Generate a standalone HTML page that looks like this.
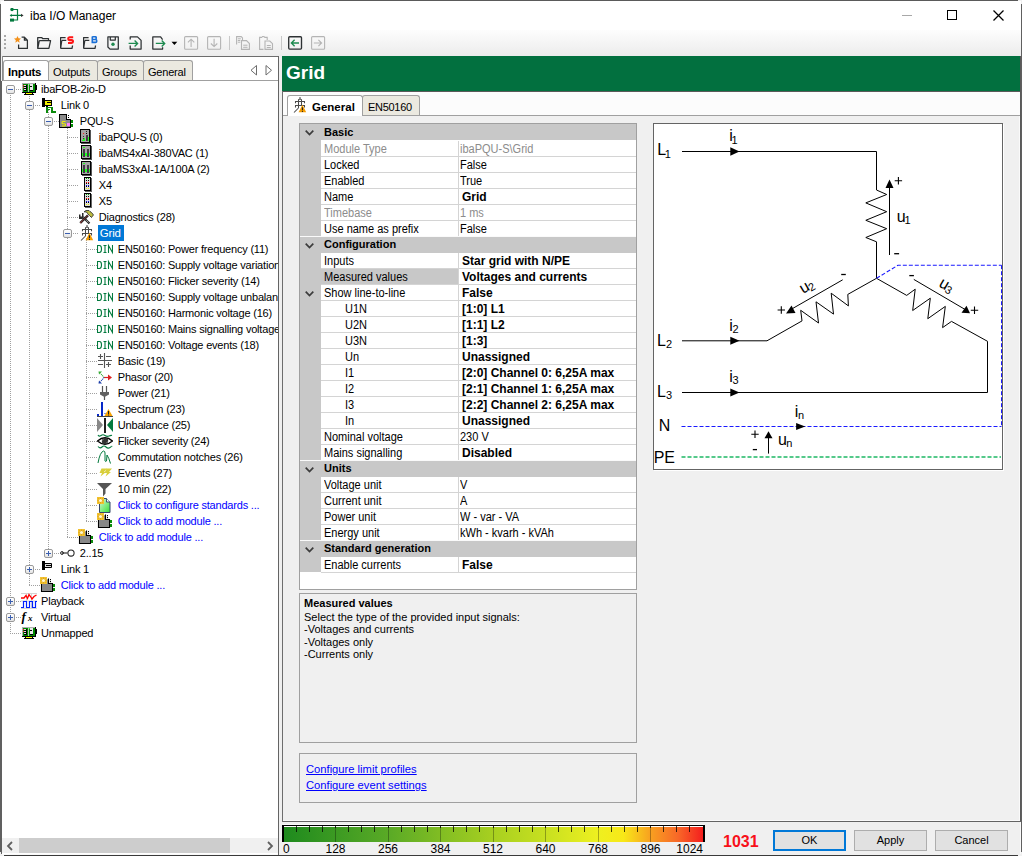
<!DOCTYPE html><html><head><meta charset="utf-8"><style>
*{margin:0;padding:0;box-sizing:border-box}
html,body{width:1022px;height:856px;overflow:hidden;background:#f0f0f0;font-family:"Liberation Sans", sans-serif;font-size:11px;color:#000}
.t{position:absolute;white-space:nowrap;line-height:15px}
.tr{letter-spacing:-0.2px}
a{color:#0000ff}
</style></head><body><div style="position:absolute;left:0px;top:0px;width:1022px;height:856px;background:#f0f0f0"></div><div style="position:absolute;left:1px;top:1px;width:1020px;height:29px;background:#fff"></div><div style="position:absolute;left:1px;top:30px;width:1020px;height:26px;background:linear-gradient(#fdfdfd,#ececec)"></div><div style="position:absolute;left:4px;top:0px;width:1014px;height:1px;background:#5a5a5a"></div><div style="position:absolute;left:0px;top:4px;width:1px;height:848px;background:#606060"></div><div style="position:absolute;left:1021px;top:4px;width:1px;height:848px;background:#606060"></div><div style="position:absolute;left:4px;top:855px;width:1014px;height:1px;background:#3a3a3a"></div><svg style="position:absolute;left:9px;top:8px;" width="16" height="16" viewBox="0 0 16 16"><circle cx="3" cy="1.5" r="1.7" fill="#037a3e"/><path d="M3 1.5H8.5V12H4 M2 7.4H12.5" stroke="#037a3e" stroke-width="1.2" fill="none"/><path d="M0.7 7.4L2.7 5.8V9z" fill="#037a3e"/><path d="M12 5.7L14.6 7.4L12 9.1z" fill="#333"/><rect x="1" y="10.6" width="4" height="3" fill="#037a3e"/></svg><div class="t" style="left:30px;top:8.8px;font-size:12px;color:#000">iba I/O Manager</div><div style="position:absolute;left:902px;top:15px;width:10px;height:1px;background:#a8a8a8"></div><div style="position:absolute;left:947px;top:10px;width:10px;height:10px;border:1px solid #000"></div><svg style="position:absolute;left:993px;top:10px;" width="11" height="11" viewBox="0 0 11 11"><path d="M0.5 0.5L10.5 10.5M10.5 0.5L0.5 10.5" stroke="#000" stroke-width="1.25"/></svg><div style="position:absolute;left:4px;top:35px;width:2px;height:2px;background:#a8a8a8"></div><div style="position:absolute;left:4px;top:39px;width:2px;height:2px;background:#a8a8a8"></div><div style="position:absolute;left:4px;top:43px;width:2px;height:2px;background:#a8a8a8"></div><div style="position:absolute;left:4px;top:47px;width:2px;height:2px;background:#a8a8a8"></div><svg style="position:absolute;left:14px;top:36px;" width="15" height="15" viewBox="0 0 15 15"><path d="M4.6 8.5V12.4H13.4V4.2L10.4 1.2H7.6 M10.4 1.2V4.2H13.4" stroke="#2d3133" stroke-width="1.25" fill="none" stroke-linejoin="round"/><path d="M3.5 0l1.05 2.3 2.45.25-1.85 1.65.55 2.45-2.2-1.3-2.15 1.3.5-2.45L0 2.55l2.45-.25z" fill="#f39019"/></svg><svg style="position:absolute;left:37px;top:36px;" width="15" height="15" viewBox="0 0 15 15"><path d="M0.7 12.4V1.5H4.6L5.6 2.5H11.5V4.6 M2.3 4.7H13.6L11.9 12.4H0.8L2.3 4.7" stroke="#2d3133" stroke-width="1.25" fill="none" stroke-linejoin="round"/></svg><svg style="position:absolute;left:60px;top:36px;" width="15" height="15" viewBox="0 0 15 15"><path d="M0.6 12.4V1.5H5.6 M1.8 4.4H6.3 M0.6 12.4H12L12.6 9.5 M1.8 4.4L0.7 12" stroke="#2d3133" stroke-width="1.25" fill="none" stroke-linejoin="round"/><path d="M13.2 1.2H9.5Q8.2 1.2 8.2 2.7Q8.2 4.1 9.5 4.1H11.6Q13 4.1 13 5.6Q13 7 11.6 7H8" stroke="#ff1414" stroke-width="2.1" fill="none"/></svg><svg style="position:absolute;left:83px;top:36px;" width="15" height="15" viewBox="0 0 15 15"><path d="M0.6 12.4V1.5H5.6 M1.8 4.4H6.3 M0.6 12.4H12L12.6 9.5 M1.8 4.4L0.7 12" stroke="#2d3133" stroke-width="1.25" fill="none" stroke-linejoin="round"/><path d="M9.3 0.6V6.4H12.3Q13.8 6.4 13.8 4.9Q13.8 3.5 12.3 3.5H9.3 M9.3 0.6H12Q13.3 0.6 13.3 2Q13.3 3.5 12 3.5" stroke="#1a6fd6" stroke-width="1.6" fill="none"/></svg><svg style="position:absolute;left:107px;top:36px;" width="15" height="15" viewBox="0 0 15 15"><path d="M0.9 0.9H11.3V13.1H3L0.9 11Z M3.3 0.9V4.1H8.3V0.9" stroke="#2d3133" stroke-width="1.25" fill="none" stroke-linejoin="round"/><circle cx="6" cy="8.3" r="1.7" fill="#1d8a4f"/></svg><svg style="position:absolute;left:128px;top:36px;" width="15" height="15" viewBox="0 0 15 15"><path d="M2.2 3.4V0.9H9.5L13.1 4.4V13.1H2.2V9.6" stroke="#2d3133" stroke-width="1.25" fill="none" stroke-linejoin="round"/><path d="M0.6 7.4H9.5M6.6 4.4L9.6 7.4L6.6 10.4" stroke="#1d8a4f" stroke-width="1.35" fill="none"/></svg><svg style="position:absolute;left:152px;top:36px;" width="15" height="15" viewBox="0 0 15 15"><path d="M10.6 3.6L8.6 0.9H0.8V13.1H10.6V11.2" stroke="#2d3133" stroke-width="1.25" fill="none" stroke-linejoin="round"/><path d="M3.8 7.4H12.6M9.7 4.4L12.7 7.4L9.7 10.4" stroke="#1d8a4f" stroke-width="1.35" fill="none"/></svg><svg style="position:absolute;left:184px;top:36px;" width="15" height="15" viewBox="0 0 15 15"><rect x="0.6" y="0.6" width="13" height="12.6" rx="1" stroke="#b4b4b4" stroke-width="1.1" fill="none"/><path d="M7.1 3.2V11M3.9 6.3L7.1 3.2l3.2 3.1" stroke="#b4b4b4" stroke-width="1.1" fill="none"/></svg><svg style="position:absolute;left:207px;top:36px;" width="15" height="15" viewBox="0 0 15 15"><rect x="0.6" y="0.6" width="13" height="12.6" rx="1" stroke="#b4b4b4" stroke-width="1.1" fill="none"/><path d="M7.1 2.8V10.6M3.9 7.5L7.1 10.6l3.2-3.1" stroke="#b4b4b4" stroke-width="1.1" fill="none"/></svg><svg style="position:absolute;left:236px;top:36px;" width="15" height="15" viewBox="0 0 15 15"><path d="M0.6 8.5V0.6H5.2L6.5 1.9V4" stroke="#b4b4b4" stroke-width="1.1" fill="none"/><path d="M1.8 2.8h3M1.8 4.5h2.5M1.8 6.2h2.5" stroke="#b4b4b4"/><path d="M5.5 4.6H10.5L13.4 7.5V13.4H5.5Z" stroke="#b4b4b4" stroke-width="1.1" fill="none"/><path d="M7.2 9.2h4.3M7.2 11.3h4.3" stroke="#b4b4b4"/></svg><svg style="position:absolute;left:259px;top:36px;" width="15" height="15" viewBox="0 0 15 15"><path d="M4.5 13.4H0.6V1.4H3.2M5.2 1.4H8.2V4" stroke="#b4b4b4" stroke-width="1.1" fill="none"/><path d="M3 0.6H5.6" stroke="#b4b4b4" stroke-width="1.1"/><path d="M6 5H10.8L13.5 7.7V13.4H6Z" stroke="#b4b4b4" stroke-width="1.1" fill="none"/><path d="M7.8 9.5h4M7.8 11.5h4" stroke="#b4b4b4"/></svg><svg style="position:absolute;left:288px;top:36px;" width="15" height="15" viewBox="0 0 15 15"><rect x="0.7" y="0.7" width="12.8" height="12.4" rx="1" stroke="#2d3133" stroke-width="1.35" fill="none"/><path d="M11 7H3.4M6.6 3.8L3.4 7l3.2 3.2" stroke="#1d8a4f" stroke-width="1.35" fill="none"/></svg><svg style="position:absolute;left:311px;top:36px;" width="15" height="15" viewBox="0 0 15 15"><rect x="0.6" y="0.6" width="13" height="12.6" rx="1" stroke="#b4b4b4" stroke-width="1.1" fill="none"/><path d="M2.8 7H10.6M7.4 3.8L10.6 7l-3.2 3.2" stroke="#b4b4b4" stroke-width="1.1" fill="none"/></svg><svg style="position:absolute;left:171px;top:41px;" width="7" height="5" viewBox="0 0 7 5"><path d="M0.5 0.8H6.3L3.4 4Z" fill="#000"/></svg><div style="position:absolute;left:229px;top:36px;width:1px;height:14px;background:#c8c8c8"></div><div style="position:absolute;left:281px;top:36px;width:1px;height:14px;background:#c8c8c8"></div><div style="position:absolute;left:2px;top:56px;width:277px;height:798px;background:#fff"></div><div style="position:absolute;left:2px;top:56px;width:277px;height:1px;background:#6d6d6d"></div><div style="position:absolute;left:2px;top:56px;width:1px;height:25px;background:#8a8a8a"></div><div style="position:absolute;left:1px;top:81px;width:1px;height:773px;background:#606060"></div><div style="position:absolute;left:278px;top:56px;width:1px;height:799px;background:#646464"></div><div style="position:absolute;left:2px;top:854px;width:276px;height:1px;background:#fafafa"></div><div style="position:absolute;left:3px;top:57px;width:275px;height:24px;background:#fff"></div><div style="position:absolute;left:3px;top:60px;width:46px;height:21px;background:#fff;border:1px solid #a0a0a0;border-bottom:none;border-radius:3px 3px 0 0"></div><div class="t" style="left:8px;top:64.5px;font-weight:bold;font-size:11.5px;letter-spacing:-0.2px">Inputs</div><div style="position:absolute;left:48px;top:60px;width:50px;height:21px;background:#ebe9e0;border:1px solid #a0a0a0;border-bottom:none;border-radius:3px 3px 0 0"></div><div class="t" style="left:53px;top:64.5px;font-weight:normal;font-size:11px;letter-spacing:-0.2px">Outputs</div><div style="position:absolute;left:97px;top:60px;width:47px;height:21px;background:#ebe9e0;border:1px solid #a0a0a0;border-bottom:none;border-radius:3px 3px 0 0"></div><div class="t" style="left:102px;top:64.5px;font-weight:normal;font-size:11px;letter-spacing:-0.2px">Groups</div><div style="position:absolute;left:143px;top:60px;width:50px;height:21px;background:#ebe9e0;border:1px solid #a0a0a0;border-bottom:none;border-radius:3px 3px 0 0"></div><div class="t" style="left:148px;top:64.5px;font-weight:normal;font-size:11px;letter-spacing:-0.2px">General</div><div style="position:absolute;left:3px;top:80px;width:275px;height:1px;background:#a0a0a0"></div><svg style="position:absolute;left:250px;top:65px;" width="8" height="11" viewBox="0 0 8 11"><path d="M6.5 0.5V10L1 5.25Z" stroke="#6d6d6d" fill="none"/></svg><svg style="position:absolute;left:265px;top:65px;" width="8" height="11" viewBox="0 0 8 11"><path d="M1 0.5V10L6.5 5.25Z" stroke="#6d6d6d" fill="none"/></svg><div class="tr" style="position:absolute;left:0;top:0;width:278px;height:837px;overflow:hidden"><div style="position:absolute;left:10px;top:89px;width:1px;height:545px;background:repeating-linear-gradient(to bottom,#a0a0a0 0 1px,transparent 1px 2px)"></div><div style="position:absolute;left:29px;top:94px;width:1px;height:492px;background:repeating-linear-gradient(to bottom,#a0a0a0 0 1px,transparent 1px 2px)"></div><div style="position:absolute;left:48px;top:110px;width:1px;height:444px;background:repeating-linear-gradient(to bottom,#a0a0a0 0 1px,transparent 1px 2px)"></div><div style="position:absolute;left:67px;top:126px;width:1px;height:412px;background:repeating-linear-gradient(to bottom,#a0a0a0 0 1px,transparent 1px 2px)"></div><div style="position:absolute;left:86px;top:238px;width:1px;height:284px;background:repeating-linear-gradient(to bottom,#a0a0a0 0 1px,transparent 1px 2px)"></div><div style="position:absolute;left:10px;top:89px;width:11px;height:1px;background:repeating-linear-gradient(to right,#a0a0a0 0 1px,transparent 1px 2px)"></div><div style="position:absolute;left:6px;top:85px;width:9px;height:9px;border:1px solid #9a9a9a;border-radius:2px;background:linear-gradient(#fff,#e4e4e4)"><div style="position:absolute;left:1px;top:3px;width:5px;height:1px;background:#3b5fb0"></div></div><svg style="position:absolute;left:21px;top:81px;" width="16" height="16" viewBox="0 0 16 16"><g shape-rendering="crispEdges"><rect x="1" y="2" width="13" height="1" fill="#b0b0b0"/><rect x="1" y="2" width="1" height="9" fill="#b0b0b0"/><rect x="2" y="3" width="12" height="8" fill="#008a00"/><rect x="2" y="4" width="1" height="1" fill="#ff2020"/><rect x="2" y="6" width="1" height="1" fill="#ff2020"/><rect x="3" y="4" width="2" height="1" fill="#e0e0e0"/><rect x="3" y="6" width="2" height="1" fill="#e0e0e0"/><rect x="3" y="8" width="2" height="1" fill="#e0e0e0"/><rect x="3" y="5" width="3" height="1" fill="#000"/><rect x="3" y="7" width="3" height="1" fill="#000"/><rect x="3" y="9" width="3" height="1" fill="#000"/><rect x="5" y="4" width="1" height="6" fill="#000"/><rect x="7" y="3" width="1" height="8" fill="#c0c0c0"/><rect x="9" y="3" width="3" height="7" fill="#e8e8e8"/><rect x="9" y="5" width="2" height="1" fill="#000"/><rect x="9" y="9" width="3" height="1" fill="#000"/><rect x="8" y="3" width="1" height="1" fill="#20ff20"/><rect x="14" y="2" width="1" height="10" fill="#000"/><rect x="15" y="4" width="1" height="5" fill="#000"/><rect x="1" y="11" width="14" height="1" fill="#000"/><rect x="5" y="12" width="6" height="1" fill="#ffff00"/><rect x="3" y="13" width="10" height="1" fill="#000"/><rect x="4" y="12" width="1" height="1" fill="#000"/><rect x="11" y="12" width="1" height="1" fill="#000"/></g></svg><div class="t" style="left:41px;top:82px;">ibaFOB-2io-D</div><div style="position:absolute;left:29px;top:105px;width:11px;height:1px;background:repeating-linear-gradient(to right,#a0a0a0 0 1px,transparent 1px 2px)"></div><div style="position:absolute;left:25px;top:101px;width:9px;height:9px;border:1px solid #9a9a9a;border-radius:2px;background:linear-gradient(#fff,#e4e4e4)"><div style="position:absolute;left:1px;top:3px;width:5px;height:1px;background:#3b5fb0"></div></div><svg style="position:absolute;left:40px;top:97px;" width="16" height="16" viewBox="0 0 16 16"><g shape-rendering="crispEdges"><rect x="2" y="1" width="3" height="9" fill="#000"/><rect x="5" y="3" width="7" height="6" fill="#000"/><rect x="5" y="4" width="6" height="4" fill="#f0f000"/><rect x="7" y="5" width="4" height="1" fill="#000"/><rect x="6" y="9" width="2" height="1" fill="#000"/><rect x="6" y="10" width="2" height="6" fill="#0a8a0a"/><rect x="6" y="10" width="5" height="1" fill="#0a8a0a"/><rect x="6" y="12" width="4" height="1" fill="#0a8a0a"/><rect x="11" y="10" width="2" height="6" fill="#0a8a0a"/><rect x="11" y="14" width="5" height="2" fill="#0a8a0a"/></g></svg><div class="t" style="left:60.8px;top:98px;">Link 0</div><div style="position:absolute;left:48px;top:121px;width:11px;height:1px;background:repeating-linear-gradient(to right,#a0a0a0 0 1px,transparent 1px 2px)"></div><div style="position:absolute;left:44px;top:117px;width:9px;height:9px;border:1px solid #9a9a9a;border-radius:2px;background:linear-gradient(#fff,#e4e4e4)"><div style="position:absolute;left:1px;top:3px;width:5px;height:1px;background:#3b5fb0"></div></div><svg style="position:absolute;left:59px;top:113px;" width="16" height="16" viewBox="0 0 16 16"><g shape-rendering="crispEdges"><rect x="1" y="2" width="7" height="13" fill="#8c8c8c"/><rect x="7" y="7" width="5" height="8" fill="#8c8c8c"/><rect x="0" y="1" width="8" height="1" fill="#000"/><rect x="0" y="1" width="1" height="14" fill="#000"/><rect x="7" y="1" width="1" height="6" fill="#000"/><rect x="7" y="6" width="5" height="1" fill="#000"/><rect x="11" y="6" width="1" height="9" fill="#000"/><rect x="0" y="14" width="12" height="1" fill="#000"/><rect x="9" y="2" width="1" height="1" fill="#000"/><rect x="9" y="4" width="1" height="1" fill="#000"/><rect x="12" y="7" width="2" height="3" fill="#008a00"/><rect x="12" y="11" width="2" height="3" fill="#008a00"/><rect x="8" y="10" width="3" height="3" fill="#ff80ff"/></g><path d="M6.5 8.5H4Q3 8.5 3 9.7Q3 10.7 4 10.7H5.5Q6.6 10.7 6.6 11.8Q6.6 13 5.5 13H3" stroke="#f0f000" stroke-width="1.1" fill="none"/></svg><div class="t" style="left:79.8px;top:114px;">PQU-S</div><div style="position:absolute;left:67px;top:137px;width:11px;height:1px;background:repeating-linear-gradient(to right,#a0a0a0 0 1px,transparent 1px 2px)"></div><svg style="position:absolute;left:78px;top:129px;" width="16" height="16" viewBox="0 0 16 16"><g shape-rendering="crispEdges"><rect x="2" y="0" width="10" height="14" fill="#000"/><rect x="3" y="1" width="8" height="12" fill="#a4a4a4"/><rect x="5" y="4" width="1" height="1" fill="#ff2020"/><rect x="8" y="2" width="1" height="1" fill="#222"/><rect x="8" y="4" width="1" height="1" fill="#000"/><rect x="8" y="6" width="2" height="6" fill="#403a44"/><rect x="10" y="8" width="1" height="4" fill="#20ff20"/><rect x="5" y="7" width="1" height="1" fill="#333"/><rect x="5" y="9" width="1" height="1" fill="#333"/><rect x="5" y="11" width="1" height="1" fill="#333"/><rect x="12" y="1" width="1" height="14" fill="#555"/><rect x="3" y="14" width="10" height="1" fill="#555"/><path d="M3 12L7 8V12Z" fill="#20ff20"/></g></svg><div class="t" style="left:98.8px;top:130px;">ibaPQU-S (0)</div><div style="position:absolute;left:67px;top:153px;width:11px;height:1px;background:repeating-linear-gradient(to right,#a0a0a0 0 1px,transparent 1px 2px)"></div><svg style="position:absolute;left:78px;top:145px;" width="16" height="16" viewBox="0 0 16 16"><g shape-rendering="crispEdges"><rect x="3" y="0" width="10" height="14" fill="#000"/><rect x="4" y="1" width="8" height="12" fill="#a4a4a4"/><rect x="5" y="2" width="2" height="1" fill="#20ff20"/><rect x="5" y="4" width="2" height="8" fill="#403a44"/><rect x="9" y="4" width="2" height="8" fill="#403a44"/><rect x="4" y="8" width="1" height="3" fill="#20ff20"/><rect x="7" y="8" width="2" height="3" fill="#20ff20"/><rect x="11" y="8" width="1" height="3" fill="#20ff20"/><rect x="13" y="1" width="1" height="14" fill="#555"/><rect x="4" y="14" width="10" height="1" fill="#555"/></g></svg><div class="t" style="left:98.8px;top:146px;">ibaMS4xAI-380VAC (1)</div><div style="position:absolute;left:67px;top:169px;width:11px;height:1px;background:repeating-linear-gradient(to right,#a0a0a0 0 1px,transparent 1px 2px)"></div><svg style="position:absolute;left:78px;top:161px;" width="16" height="16" viewBox="0 0 16 16"><g shape-rendering="crispEdges"><rect x="3" y="0" width="10" height="14" fill="#000"/><rect x="4" y="1" width="8" height="12" fill="#a4a4a4"/><rect x="5" y="2" width="2" height="1" fill="#20ff20"/><rect x="5" y="4" width="2" height="8" fill="#403a44"/><rect x="9" y="4" width="2" height="8" fill="#403a44"/><rect x="4" y="8" width="1" height="3" fill="#20ff20"/><rect x="7" y="8" width="2" height="3" fill="#20ff20"/><rect x="11" y="8" width="1" height="3" fill="#20ff20"/><rect x="13" y="1" width="1" height="14" fill="#555"/><rect x="4" y="14" width="10" height="1" fill="#555"/></g></svg><div class="t" style="left:98.8px;top:162px;">ibaMS3xAI-1A/100A (2)</div><div style="position:absolute;left:67px;top:185px;width:11px;height:1px;background:repeating-linear-gradient(to right,#a0a0a0 0 1px,transparent 1px 2px)"></div><svg style="position:absolute;left:78px;top:177px;" width="16" height="16" viewBox="0 0 16 16"><g shape-rendering="crispEdges"><rect x="6" y="0" width="7" height="14" fill="#000"/><rect x="7" y="1" width="5" height="12" fill="#dcdcdc"/><rect x="13" y="1" width="1" height="14" fill="#666"/><rect x="7" y="14" width="7" height="1" fill="#666"/><rect x="8" y="1" width="1" height="1" fill="#0a0"/><rect x="8" y="3" width="1" height="1" fill="#000"/><rect x="8" y="5" width="1" height="1" fill="#f00"/><rect x="8" y="6" width="1" height="1" fill="#000"/><rect x="8" y="8" width="1" height="1" fill="#00f"/><rect x="8" y="9" width="1" height="1" fill="#000"/><rect x="8" y="11" width="1" height="1" fill="#ee0"/><rect x="10" y="1" width="1" height="1" fill="#0a0"/><rect x="10" y="3" width="1" height="1" fill="#000"/><rect x="10" y="5" width="1" height="1" fill="#f00"/><rect x="10" y="6" width="1" height="1" fill="#000"/><rect x="10" y="8" width="1" height="1" fill="#00f"/><rect x="10" y="9" width="1" height="1" fill="#000"/><rect x="10" y="11" width="1" height="1" fill="#ee0"/></g></svg><div class="t" style="left:98.8px;top:178px;">X4</div><div style="position:absolute;left:67px;top:201px;width:11px;height:1px;background:repeating-linear-gradient(to right,#a0a0a0 0 1px,transparent 1px 2px)"></div><svg style="position:absolute;left:78px;top:193px;" width="16" height="16" viewBox="0 0 16 16"><g shape-rendering="crispEdges"><rect x="6" y="0" width="7" height="14" fill="#000"/><rect x="7" y="1" width="5" height="12" fill="#dcdcdc"/><rect x="13" y="1" width="1" height="14" fill="#666"/><rect x="7" y="14" width="7" height="1" fill="#666"/><rect x="8" y="1" width="1" height="1" fill="#0a0"/><rect x="8" y="3" width="1" height="1" fill="#000"/><rect x="8" y="5" width="1" height="1" fill="#f00"/><rect x="8" y="6" width="1" height="1" fill="#000"/><rect x="8" y="8" width="1" height="1" fill="#00f"/><rect x="8" y="9" width="1" height="1" fill="#000"/><rect x="8" y="11" width="1" height="1" fill="#ee0"/><rect x="10" y="1" width="1" height="1" fill="#0a0"/><rect x="10" y="3" width="1" height="1" fill="#000"/><rect x="10" y="5" width="1" height="1" fill="#f00"/><rect x="10" y="6" width="1" height="1" fill="#000"/><rect x="10" y="8" width="1" height="1" fill="#00f"/><rect x="10" y="9" width="1" height="1" fill="#000"/><rect x="10" y="11" width="1" height="1" fill="#ee0"/></g></svg><div class="t" style="left:98.8px;top:194px;">X5</div><div style="position:absolute;left:67px;top:217px;width:11px;height:1px;background:repeating-linear-gradient(to right,#a0a0a0 0 1px,transparent 1px 2px)"></div><svg style="position:absolute;left:78px;top:209px;" width="16" height="16" viewBox="0 0 16 16"><path d="M5 8L11.5 14.5" stroke="#222" stroke-width="2.2"/><path d="M5 8L11.5 14.5" stroke="#fff" stroke-width="0.8" stroke-dasharray="1 1"/><path d="M1 10V5.5H2.5V7.5H4V4H5.5V9L4.5 10Z" fill="#2a2a2a"/><path d="M2.2 14L10 6.3" stroke="#222" stroke-width="2.4"/><path d="M2.2 14L10 6.3" stroke="#d44" stroke-width="1" stroke-dasharray="1 0.6"/><path d="M6 2.8L8 1.5H11L12 2.5L13.5 3.5L15.5 6L14.5 7L13.5 8.5L11.5 6.5L9.5 4.5L8.5 3Z" fill="#bcbc40" stroke="#333" stroke-width="0.9" stroke-linejoin="round"/></svg><div class="t" style="left:98.8px;top:210px;">Diagnostics (28)</div><div style="position:absolute;left:67px;top:233px;width:11px;height:1px;background:repeating-linear-gradient(to right,#a0a0a0 0 1px,transparent 1px 2px)"></div><div style="position:absolute;left:63px;top:229px;width:9px;height:9px;border:1px solid #9a9a9a;border-radius:2px;background:linear-gradient(#fff,#e4e4e4)"><div style="position:absolute;left:1px;top:3px;width:5px;height:1px;background:#3b5fb0"></div></div><svg style="position:absolute;left:78px;top:225px;" width="16" height="16" viewBox="0 0 16 16"><path d="M7.5 11V2.8L9 1.8L10.5 2.8V9 M4.5 6.2V4.5H13.5V6.2 M4.5 10.5V8.5H13.5V10.5 M9 0V1.8 M7.5 11L3 15.5" stroke="#4a4a4a" stroke-width="1.05" fill="none"/><path d="M11.4 7.8L15.2 15.3H7.6Z" fill="#f59d00"/><rect x="10.9" y="10.3" width="1.1" height="2.8" fill="#222"/><rect x="10.9" y="13.8" width="1.1" height="1.1" fill="#222"/></svg><div style="position:absolute;left:97.8px;top:225px;width:26px;height:16px;background:#0078d7"></div><div class="t" style="left:99.8px;top:226px;color:#fff;font-size:11.5px">Grid</div><div style="position:absolute;left:86px;top:249px;width:11px;height:1px;background:repeating-linear-gradient(to right,#a0a0a0 0 1px,transparent 1px 2px)"></div><svg style="position:absolute;left:97px;top:241px;" width="16" height="16" viewBox="0 0 16 16"><path d="M0.5 4.5V11.5H2.5Q4.5 11.5 4.5 8Q4.5 4.5 2.5 4.5Z M6.5 4.5H9.5M8 4.5V11.5M6.5 11.5H9.5 M11.5 12V4.5L15.5 11.5V4" stroke="#037a3e" stroke-width="1.1" fill="none"/></svg><div class="t" style="left:117.8px;top:242px;">EN50160: Power frequency (11)</div><div style="position:absolute;left:86px;top:265px;width:11px;height:1px;background:repeating-linear-gradient(to right,#a0a0a0 0 1px,transparent 1px 2px)"></div><svg style="position:absolute;left:97px;top:257px;" width="16" height="16" viewBox="0 0 16 16"><path d="M0.5 4.5V11.5H2.5Q4.5 11.5 4.5 8Q4.5 4.5 2.5 4.5Z M6.5 4.5H9.5M8 4.5V11.5M6.5 11.5H9.5 M11.5 12V4.5L15.5 11.5V4" stroke="#037a3e" stroke-width="1.1" fill="none"/></svg><div class="t" style="left:117.8px;top:258px;">EN50160: Supply voltage variation</div><div style="position:absolute;left:86px;top:281px;width:11px;height:1px;background:repeating-linear-gradient(to right,#a0a0a0 0 1px,transparent 1px 2px)"></div><svg style="position:absolute;left:97px;top:273px;" width="16" height="16" viewBox="0 0 16 16"><path d="M0.5 4.5V11.5H2.5Q4.5 11.5 4.5 8Q4.5 4.5 2.5 4.5Z M6.5 4.5H9.5M8 4.5V11.5M6.5 11.5H9.5 M11.5 12V4.5L15.5 11.5V4" stroke="#037a3e" stroke-width="1.1" fill="none"/></svg><div class="t" style="left:117.8px;top:274px;">EN50160: Flicker severity (14)</div><div style="position:absolute;left:86px;top:297px;width:11px;height:1px;background:repeating-linear-gradient(to right,#a0a0a0 0 1px,transparent 1px 2px)"></div><svg style="position:absolute;left:97px;top:289px;" width="16" height="16" viewBox="0 0 16 16"><path d="M0.5 4.5V11.5H2.5Q4.5 11.5 4.5 8Q4.5 4.5 2.5 4.5Z M6.5 4.5H9.5M8 4.5V11.5M6.5 11.5H9.5 M11.5 12V4.5L15.5 11.5V4" stroke="#037a3e" stroke-width="1.1" fill="none"/></svg><div class="t" style="left:117.8px;top:290px;">EN50160: Supply voltage unbalan</div><div style="position:absolute;left:86px;top:313px;width:11px;height:1px;background:repeating-linear-gradient(to right,#a0a0a0 0 1px,transparent 1px 2px)"></div><svg style="position:absolute;left:97px;top:305px;" width="16" height="16" viewBox="0 0 16 16"><path d="M0.5 4.5V11.5H2.5Q4.5 11.5 4.5 8Q4.5 4.5 2.5 4.5Z M6.5 4.5H9.5M8 4.5V11.5M6.5 11.5H9.5 M11.5 12V4.5L15.5 11.5V4" stroke="#037a3e" stroke-width="1.1" fill="none"/></svg><div class="t" style="left:117.8px;top:306px;">EN50160: Harmonic voltage (16)</div><div style="position:absolute;left:86px;top:329px;width:11px;height:1px;background:repeating-linear-gradient(to right,#a0a0a0 0 1px,transparent 1px 2px)"></div><svg style="position:absolute;left:97px;top:321px;" width="16" height="16" viewBox="0 0 16 16"><path d="M0.5 4.5V11.5H2.5Q4.5 11.5 4.5 8Q4.5 4.5 2.5 4.5Z M6.5 4.5H9.5M8 4.5V11.5M6.5 11.5H9.5 M11.5 12V4.5L15.5 11.5V4" stroke="#037a3e" stroke-width="1.1" fill="none"/></svg><div class="t" style="left:117.8px;top:322px;">EN50160: Mains signalling voltage</div><div style="position:absolute;left:86px;top:345px;width:11px;height:1px;background:repeating-linear-gradient(to right,#a0a0a0 0 1px,transparent 1px 2px)"></div><svg style="position:absolute;left:97px;top:337px;" width="16" height="16" viewBox="0 0 16 16"><path d="M0.5 4.5V11.5H2.5Q4.5 11.5 4.5 8Q4.5 4.5 2.5 4.5Z M6.5 4.5H9.5M8 4.5V11.5M6.5 11.5H9.5 M11.5 12V4.5L15.5 11.5V4" stroke="#037a3e" stroke-width="1.1" fill="none"/></svg><div class="t" style="left:117.8px;top:338px;">EN50160: Voltage events (18)</div><div style="position:absolute;left:86px;top:361px;width:11px;height:1px;background:repeating-linear-gradient(to right,#a0a0a0 0 1px,transparent 1px 2px)"></div><svg style="position:absolute;left:97px;top:353px;" width="16" height="16" viewBox="0 0 16 16"><path d="M7.5 0V15M1 7.5H15M1 3.5H6M3.5 1V6M9 3.5H14M1 11.5H6M9 11.5H14M11.5 9V14" stroke="#555" stroke-width="1.1" fill="none"/></svg><div class="t" style="left:117.8px;top:354px;">Basic (19)</div><div style="position:absolute;left:86px;top:377px;width:11px;height:1px;background:repeating-linear-gradient(to right,#a0a0a0 0 1px,transparent 1px 2px)"></div><svg style="position:absolute;left:97px;top:369px;" width="16" height="16" viewBox="0 0 16 16"><path d="M7 8.5H12" stroke="#d22" stroke-width="1.2"/><path d="M11 5.5L15 8.5L11 11.5Z" fill="#d22"/><path d="M7 8.5L3.5 4.5" stroke="#3a3" stroke-width="1.1" stroke-dasharray="1 0.7"/><path d="M1.5 2.5H5L2 5.5Z" fill="#3a3"/><path d="M7 8.5L3.5 12.5" stroke="#1a3ca8" stroke-width="1.1" stroke-dasharray="1 0.7"/><path d="M1.5 14.5H5L2 11.5Z" fill="#1a3ca8"/></svg><div class="t" style="left:117.8px;top:370px;">Phasor (20)</div><div style="position:absolute;left:86px;top:393px;width:11px;height:1px;background:repeating-linear-gradient(to right,#a0a0a0 0 1px,transparent 1px 2px)"></div><svg style="position:absolute;left:97px;top:385px;" width="16" height="16" viewBox="0 0 16 16"><path d="M5.5 1V7M9.5 1V7M7.5 11V15" stroke="#555" stroke-width="1.2" fill="none"/><path d="M3 7H12V9.5L7.5 12L3 9.5Z" fill="#606060"/></svg><div class="t" style="left:117.8px;top:386px;">Power (21)</div><div style="position:absolute;left:86px;top:409px;width:11px;height:1px;background:repeating-linear-gradient(to right,#a0a0a0 0 1px,transparent 1px 2px)"></div><svg style="position:absolute;left:97px;top:401px;" width="16" height="16" viewBox="0 0 16 16"><rect x="4" y="1" width="2" height="14" fill="#0628c8"/><rect x="0" y="13" width="2" height="2" fill="#0628c8"/><rect x="7.5" y="12" width="1" height="1" fill="#0628c8"/><path d="M0 15.5H16" stroke="#444"/><path d="M11.5 8L15.5 15H7.5Z" fill="#f7a200"/><rect x="11" y="10" width="1" height="3" fill="#222"/><rect x="11" y="13.5" width="1" height="1" fill="#222"/></svg><div class="t" style="left:117.8px;top:402px;">Spectrum (23)</div><div style="position:absolute;left:86px;top:425px;width:11px;height:1px;background:repeating-linear-gradient(to right,#a0a0a0 0 1px,transparent 1px 2px)"></div><svg style="position:absolute;left:97px;top:417px;" width="16" height="16" viewBox="0 0 16 16"><path d="M0 1L6 8L0 15Z" fill="#888"/><rect x="7" y="1" width="2" height="15" fill="#222"/><path d="M16 1L10 8L16 15Z" fill="#037a3e"/></svg><div class="t" style="left:117.8px;top:418px;">Unbalance (25)</div><div style="position:absolute;left:86px;top:441px;width:11px;height:1px;background:repeating-linear-gradient(to right,#a0a0a0 0 1px,transparent 1px 2px)"></div><svg style="position:absolute;left:97px;top:433px;" width="16" height="16" viewBox="0 0 16 16"><path d="M1 2Q2 4 4 2.5T8 2.5T12 3T15 2.5M1 13.5Q3 16 5 14T9 14T13 14.5T15 13.5" stroke="#037a3e" stroke-width="1.1" fill="none"/><path d="M0.5 8Q8 1.5 15.5 8Q8 14.5 0.5 8Z" fill="#fff" stroke="#000" stroke-width="1.3"/><circle cx="8" cy="8" r="3.2" fill="#333"/><path d="M5 7.5L6 6.5M11 8.5L10 9.5" stroke="#fff" stroke-width="0.8"/></svg><div class="t" style="left:117.8px;top:434px;">Flicker severity (24)</div><div style="position:absolute;left:86px;top:457px;width:11px;height:1px;background:repeating-linear-gradient(to right,#a0a0a0 0 1px,transparent 1px 2px)"></div><svg style="position:absolute;left:97px;top:449px;" width="16" height="16" viewBox="0 0 16 16"><path d="M1 14Q3 3 6.5 2Q8 2 8 4V12Q8.5 13 9.5 12L10 6Q12 9 13.5 14.5" stroke="#037a3e" stroke-width="1" fill="none"/></svg><div class="t" style="left:117.8px;top:450px;">Commutation notches (26)</div><div style="position:absolute;left:86px;top:473px;width:11px;height:1px;background:repeating-linear-gradient(to right,#a0a0a0 0 1px,transparent 1px 2px)"></div><svg style="position:absolute;left:97px;top:465px;" width="16" height="16" viewBox="0 0 16 16"><path d="M4.5 3.5H10L7 7H9L3.5 11.5L5 8H2.5Z" fill="#d9cf3a"/><path d="M9.5 3.5H15L12 7H14L8.5 11.5L10 8H7.5Z" fill="#d9cf3a"/></svg><div class="t" style="left:117.8px;top:466px;">Events (27)</div><div style="position:absolute;left:86px;top:489px;width:11px;height:1px;background:repeating-linear-gradient(to right,#a0a0a0 0 1px,transparent 1px 2px)"></div><svg style="position:absolute;left:97px;top:481px;" width="16" height="16" viewBox="0 0 16 16"><path d="M0 2H15L8.5 8V12.5L6 15.5V8Z" fill="#555"/></svg><div class="t" style="left:117.8px;top:482px;">10 min (22)</div><div style="position:absolute;left:86px;top:505px;width:11px;height:1px;background:repeating-linear-gradient(to right,#a0a0a0 0 1px,transparent 1px 2px)"></div><svg style="position:absolute;left:97px;top:497px;" width="16" height="16" viewBox="0 0 16 16"><defs><linearGradient id="pg" x1="0" y1="0" x2="1" y2="1"><stop offset="0" stop-color="#d8f8d8"/><stop offset="1" stop-color="#38e038"/></linearGradient></defs><path d="M2.5 1.5H9.5L13 5V15.5H2.5Z" fill="url(#pg)" stroke="#34466a" stroke-width="1"/><path d="M9.5 1.5V5H13" fill="#fff" stroke="#34466a" stroke-width="0.9"/><rect x="0" y="0" width="7" height="7" fill="#f2c230"/><path d="M3.5 0.5V6.5M0.5 3.5H6.5M1.3 1.3L5.7 5.7M5.7 1.3L1.3 5.7" stroke="#d99a10" stroke-width="0.7"/><circle cx="3.5" cy="3.5" r="1.6" fill="#fff8d0"/></svg><div class="t" style="left:117.8px;top:498px;color:#0000ff">Click to configure standards ...</div><div style="position:absolute;left:86px;top:521px;width:11px;height:1px;background:repeating-linear-gradient(to right,#a0a0a0 0 1px,transparent 1px 2px)"></div><svg style="position:absolute;left:97px;top:513px;" width="16" height="16" viewBox="0 0 16 16"><path d="M1.5 7V14.5H12.5V6.5H8.5V1.5" fill="#888" stroke="#000" stroke-width="1.1"/><rect x="2" y="7" width="10" height="7" fill="#888"/><rect x="10" y="2" width="1" height="1.2" fill="#000"/><rect x="10" y="4" width="1" height="1.2" fill="#000"/><rect x="13" y="7" width="2" height="3" fill="#0a8a0a"/><rect x="13" y="11" width="2" height="3" fill="#0a8a0a"/><rect x="0" y="0" width="7" height="7" fill="#f2c230"/><path d="M3.5 0.5V6.5M0.5 3.5H6.5M1.3 1.3L5.7 5.7M5.7 1.3L1.3 5.7" stroke="#d99a10" stroke-width="0.7"/><circle cx="3.5" cy="3.5" r="1.6" fill="#fff8d0"/></svg><div class="t" style="left:117.8px;top:514px;color:#0000ff">Click to add module ...</div><div style="position:absolute;left:67px;top:537px;width:11px;height:1px;background:repeating-linear-gradient(to right,#a0a0a0 0 1px,transparent 1px 2px)"></div><svg style="position:absolute;left:78px;top:529px;" width="16" height="16" viewBox="0 0 16 16"><path d="M1.5 7V14.5H12.5V6.5H8.5V1.5" fill="#888" stroke="#000" stroke-width="1.1"/><rect x="2" y="7" width="10" height="7" fill="#888"/><rect x="10" y="2" width="1" height="1.2" fill="#000"/><rect x="10" y="4" width="1" height="1.2" fill="#000"/><rect x="13" y="7" width="2" height="3" fill="#0a8a0a"/><rect x="13" y="11" width="2" height="3" fill="#0a8a0a"/><rect x="0" y="0" width="7" height="7" fill="#f2c230"/><path d="M3.5 0.5V6.5M0.5 3.5H6.5M1.3 1.3L5.7 5.7M5.7 1.3L1.3 5.7" stroke="#d99a10" stroke-width="0.7"/><circle cx="3.5" cy="3.5" r="1.6" fill="#fff8d0"/></svg><div class="t" style="left:98.8px;top:530px;color:#0000ff">Click to add module ...</div><div style="position:absolute;left:48px;top:553px;width:11px;height:1px;background:repeating-linear-gradient(to right,#a0a0a0 0 1px,transparent 1px 2px)"></div><div style="position:absolute;left:44px;top:549px;width:9px;height:9px;border:1px solid #9a9a9a;border-radius:2px;background:linear-gradient(#fff,#e4e4e4)"><div style="position:absolute;left:1px;top:3px;width:5px;height:1px;background:#3b5fb0"></div><div style="position:absolute;left:3px;top:1px;width:1px;height:5px;background:#3b5fb0"></div></div><svg style="position:absolute;left:59px;top:545px;" width="16" height="16" viewBox="0 0 16 16"><path d="M3 8H8.5" stroke="#222" stroke-width="1.1"/><circle cx="3" cy="8" r="1.4" fill="none" stroke="#222" stroke-width="1"/><circle cx="12" cy="8" r="3.1" fill="none" stroke="#222" stroke-width="1.05"/></svg><div class="t" style="left:79.8px;top:546px;">2..15</div><div style="position:absolute;left:29px;top:569px;width:11px;height:1px;background:repeating-linear-gradient(to right,#a0a0a0 0 1px,transparent 1px 2px)"></div><div style="position:absolute;left:25px;top:565px;width:9px;height:9px;border:1px solid #9a9a9a;border-radius:2px;background:linear-gradient(#fff,#e4e4e4)"><div style="position:absolute;left:1px;top:3px;width:5px;height:1px;background:#3b5fb0"></div><div style="position:absolute;left:3px;top:1px;width:1px;height:5px;background:#3b5fb0"></div></div><svg style="position:absolute;left:40px;top:561px;" width="16" height="16" viewBox="0 0 16 16"><rect x="2" y="0" width="3" height="9" fill="#000"/><path d="M5 2.5H11.5V6.5H5" fill="#ddd" stroke="#000" stroke-width="1"/><rect x="6" y="4" width="5" height="1" fill="#000"/></svg><div class="t" style="left:60.8px;top:562px;">Link 1</div><div style="position:absolute;left:29px;top:585px;width:11px;height:1px;background:repeating-linear-gradient(to right,#a0a0a0 0 1px,transparent 1px 2px)"></div><svg style="position:absolute;left:40px;top:577px;" width="16" height="16" viewBox="0 0 16 16"><path d="M1.5 7V14.5H12.5V6.5H8.5V1.5" fill="#888" stroke="#000" stroke-width="1.1"/><rect x="2" y="7" width="10" height="7" fill="#888"/><rect x="10" y="2" width="1" height="1.2" fill="#000"/><rect x="10" y="4" width="1" height="1.2" fill="#000"/><rect x="13" y="7" width="2" height="3" fill="#0a8a0a"/><rect x="13" y="11" width="2" height="3" fill="#0a8a0a"/><rect x="0" y="0" width="7" height="7" fill="#f2c230"/><path d="M3.5 0.5V6.5M0.5 3.5H6.5M1.3 1.3L5.7 5.7M5.7 1.3L1.3 5.7" stroke="#d99a10" stroke-width="0.7"/><circle cx="3.5" cy="3.5" r="1.6" fill="#fff8d0"/></svg><div class="t" style="left:60.8px;top:578px;color:#0000ff">Click to add module ...</div><div style="position:absolute;left:10px;top:601px;width:11px;height:1px;background:repeating-linear-gradient(to right,#a0a0a0 0 1px,transparent 1px 2px)"></div><div style="position:absolute;left:6px;top:597px;width:9px;height:9px;border:1px solid #9a9a9a;border-radius:2px;background:linear-gradient(#fff,#e4e4e4)"><div style="position:absolute;left:1px;top:3px;width:5px;height:1px;background:#3b5fb0"></div><div style="position:absolute;left:3px;top:1px;width:1px;height:5px;background:#3b5fb0"></div></div><svg style="position:absolute;left:21px;top:593px;" width="16" height="16" viewBox="0 0 16 16"><path d="M0 0.5H16M0 15.5H16M0 8H16M5.5 0V16M10.5 0V16" stroke="#d4d4d4" stroke-width="1"/><path d="M0 5H3L5 2.5L6.5 5.5L8 1.5L9.5 3.5L11 6L13 3.5L15.5 2" stroke="#ff0000" stroke-width="1.3" fill="none"/><path d="M0 14.5H2.5V8.5H5.5V14.5H8.5V8.5H11.5V14.5H14.5V8.5H16" stroke="#0020ff" stroke-width="1.2" fill="none"/></svg><div class="t" style="left:41px;top:594px;">Playback</div><div style="position:absolute;left:10px;top:617px;width:11px;height:1px;background:repeating-linear-gradient(to right,#a0a0a0 0 1px,transparent 1px 2px)"></div><div style="position:absolute;left:6px;top:613px;width:9px;height:9px;border:1px solid #9a9a9a;border-radius:2px;background:linear-gradient(#fff,#e4e4e4)"><div style="position:absolute;left:1px;top:3px;width:5px;height:1px;background:#3b5fb0"></div><div style="position:absolute;left:3px;top:1px;width:1px;height:5px;background:#3b5fb0"></div></div><svg style="position:absolute;left:21px;top:609px;" width="16" height="16" viewBox="0 0 16 16"><text x="0.5" y="12" font-size="13" font-style="italic" font-weight="bold" fill="#000" font-family="Liberation Serif">f</text><text x="7" y="12" font-size="9" font-style="italic" font-weight="bold" fill="#000" font-family="Liberation Serif">x</text></svg><div class="t" style="left:41px;top:610px;">Virtual</div><div style="position:absolute;left:10px;top:633px;width:11px;height:1px;background:repeating-linear-gradient(to right,#a0a0a0 0 1px,transparent 1px 2px)"></div><svg style="position:absolute;left:21px;top:625px;" width="16" height="16" viewBox="0 0 16 16"><g shape-rendering="crispEdges"><rect x="1" y="2" width="13" height="1" fill="#b0b0b0"/><rect x="1" y="2" width="1" height="9" fill="#b0b0b0"/><rect x="2" y="3" width="12" height="8" fill="#008a00"/><rect x="2" y="4" width="1" height="1" fill="#ff2020"/><rect x="2" y="6" width="1" height="1" fill="#ff2020"/><rect x="3" y="4" width="2" height="1" fill="#e0e0e0"/><rect x="3" y="6" width="2" height="1" fill="#e0e0e0"/><rect x="3" y="8" width="2" height="1" fill="#e0e0e0"/><rect x="3" y="5" width="3" height="1" fill="#000"/><rect x="3" y="7" width="3" height="1" fill="#000"/><rect x="3" y="9" width="3" height="1" fill="#000"/><rect x="5" y="4" width="1" height="6" fill="#000"/><rect x="7" y="3" width="1" height="8" fill="#c0c0c0"/><rect x="9" y="3" width="3" height="7" fill="#e8e8e8"/><rect x="9" y="5" width="2" height="1" fill="#000"/><rect x="9" y="9" width="3" height="1" fill="#000"/><rect x="8" y="3" width="1" height="1" fill="#20ff20"/><rect x="14" y="2" width="1" height="10" fill="#000"/><rect x="15" y="4" width="1" height="5" fill="#000"/><rect x="1" y="11" width="14" height="1" fill="#000"/><rect x="5" y="12" width="6" height="1" fill="#ffff00"/><rect x="3" y="13" width="10" height="1" fill="#000"/><rect x="4" y="12" width="1" height="1" fill="#000"/><rect x="11" y="12" width="1" height="1" fill="#000"/></g></svg><div class="t" style="left:41px;top:626px;">Unmapped</div></div><div style="position:absolute;left:2px;top:838px;width:276px;height:15px;background:#f0f0f0"></div><div style="position:absolute;left:19px;top:838px;width:211px;height:15px;background:#cdcdcd"></div><svg style="position:absolute;left:6px;top:841px;" width="8" height="10" viewBox="0 0 8 10"><path d="M6 1L2 5L6 9" stroke="#606060" stroke-width="1.8" fill="none"/></svg><svg style="position:absolute;left:266px;top:841px;" width="8" height="10" viewBox="0 0 8 10"><path d="M2 1L6 5L2 9" stroke="#606060" stroke-width="1.8" fill="none"/></svg><div style="position:absolute;left:282px;top:56px;width:738px;height:35px;background:#02703f"></div><div class="t" style="left:286px;top:62px;font-size:19px;font-weight:bold;color:#fff;line-height:22px">Grid</div><div style="position:absolute;left:282px;top:91px;width:738px;height:1px;background:#5a5a5a"></div><div style="position:absolute;left:1020px;top:56px;width:1px;height:766px;background:#5a5a5a"></div><div style="position:absolute;left:1020px;top:822px;width:1px;height:32px;background:#fafafa"></div><div style="position:absolute;left:283px;top:92px;width:737px;height:23px;background:#fcfcfc"></div><div style="position:absolute;left:283px;top:115px;width:737px;height:706px;background:#f0f0f0"></div><div style="position:absolute;left:283px;top:115px;width:737px;height:1px;background:#a0a0a0"></div><div style="position:absolute;left:1019px;top:116px;width:1px;height:705px;background:#fafafa"></div><div style="position:absolute;left:283px;top:820px;width:737px;height:1px;background:#fafafa"></div><div style="position:absolute;left:282px;top:821px;width:739px;height:1px;background:#646464"></div><div style="position:absolute;left:282px;top:91px;width:1px;height:731px;background:#6e6e6e"></div><div style="position:absolute;left:287px;top:95px;width:76px;height:21px;background:#fff;border:1px solid #a0a0a0;border-bottom:none;border-radius:3px 3px 0 0"></div><div style="position:absolute;left:362px;top:95px;width:58px;height:20px;background:#ebe9e0;border:1px solid #a0a0a0;border-bottom:none;border-radius:3px 3px 0 0"></div><svg style="position:absolute;left:290.5px;top:97px;" width="16" height="16" viewBox="0 0 16 16"><path d="M7.5 11V2.8L9 1.8L10.5 2.8V9 M4.5 6.2V4.5H13.5V6.2 M4.5 10.5V8.5H13.5V10.5 M9 0V1.8 M7.5 11L3 15.5" stroke="#4a4a4a" stroke-width="1.05" fill="none"/><path d="M11.4 7.8L15.2 15.3H7.6Z" fill="#f59d00"/><rect x="10.9" y="10.3" width="1.1" height="2.8" fill="#222"/><rect x="10.9" y="13.8" width="1.1" height="1.1" fill="#222"/></svg><div class="t" style="left:312px;top:100px;font-weight:bold;font-size:11.5px">General</div><div class="t" style="left:368px;top:100px;font-size:11px;letter-spacing:-0.3px">EN50160</div><div style="position:absolute;left:299px;top:123px;width:338px;height:467px;background:#fff;border:1px solid #a0a0a0"></div><div style="position:absolute;left:300px;top:124px;width:21px;height:448px;background:#c8c8c8"></div><div style="position:absolute;left:300px;top:124px;width:336px;height:16px;background:#c8c8c8"></div><svg style="position:absolute;left:305px;top:129px;" width="10" height="7" viewBox="0 0 10 7"><path d="M0.7 1.7L4.5 5.5L8.3 1.7" stroke="#3c3c3c" stroke-width="1.7" fill="none"/></svg><div class="t" style="left:324px;top:125px;font-weight:bold">Basic</div><div style="position:absolute;left:321px;top:141px;width:137px;height:15px;background:#fff"></div><div style="position:absolute;left:321px;top:156px;width:315px;height:1px;background:#d4d4d4"></div><div style="position:absolute;left:458px;top:141px;width:1px;height:16px;background:#d4d4d4"></div><div class="t" style="left:324px;top:141.5px;color:#8c8c8c;font-size:12px;transform:scaleX(0.917);transform-origin:0 0">Module Type</div><div class="t" style="left:460px;top:141.5px;color:#8c8c8c;font-size:12px;transform:scaleX(0.917);transform-origin:0 0">ibaPQU-S\Grid</div><div style="position:absolute;left:321px;top:157px;width:137px;height:15px;background:#fff"></div><div style="position:absolute;left:321px;top:172px;width:315px;height:1px;background:#d4d4d4"></div><div style="position:absolute;left:458px;top:157px;width:1px;height:16px;background:#d4d4d4"></div><div class="t" style="left:324px;top:157.5px;color:#000;font-size:12px;transform:scaleX(0.917);transform-origin:0 0">Locked</div><div class="t" style="left:460px;top:157.5px;color:#000;font-size:12px;transform:scaleX(0.917);transform-origin:0 0">False</div><div style="position:absolute;left:321px;top:173px;width:137px;height:15px;background:#fff"></div><div style="position:absolute;left:321px;top:188px;width:315px;height:1px;background:#d4d4d4"></div><div style="position:absolute;left:458px;top:173px;width:1px;height:16px;background:#d4d4d4"></div><div class="t" style="left:324px;top:173.5px;color:#000;font-size:12px;transform:scaleX(0.917);transform-origin:0 0">Enabled</div><div class="t" style="left:460px;top:173.5px;color:#000;font-size:12px;transform:scaleX(0.917);transform-origin:0 0">True</div><div style="position:absolute;left:321px;top:189px;width:137px;height:15px;background:#fff"></div><div style="position:absolute;left:321px;top:204px;width:315px;height:1px;background:#d4d4d4"></div><div style="position:absolute;left:458px;top:189px;width:1px;height:16px;background:#d4d4d4"></div><div class="t" style="left:324px;top:189.5px;color:#000;font-size:12px;transform:scaleX(0.917);transform-origin:0 0">Name</div><div class="t" style="left:462px;top:189.5px;color:#000;font-size:12px;transform:scaleX(0.917);transform-origin:0 0;font-weight:bold;transform:none">Grid</div><div style="position:absolute;left:321px;top:205px;width:137px;height:15px;background:#fff"></div><div style="position:absolute;left:321px;top:220px;width:315px;height:1px;background:#d4d4d4"></div><div style="position:absolute;left:458px;top:205px;width:1px;height:16px;background:#d4d4d4"></div><div class="t" style="left:324px;top:205.5px;color:#8c8c8c;font-size:12px;transform:scaleX(0.917);transform-origin:0 0">Timebase</div><div class="t" style="left:460px;top:205.5px;color:#8c8c8c;font-size:12px;transform:scaleX(0.917);transform-origin:0 0">1 ms</div><div style="position:absolute;left:321px;top:221px;width:137px;height:15px;background:#fff"></div><div style="position:absolute;left:321px;top:236px;width:315px;height:1px;background:#d4d4d4"></div><div style="position:absolute;left:458px;top:221px;width:1px;height:16px;background:#d4d4d4"></div><div class="t" style="left:324px;top:221.5px;color:#000;font-size:12px;transform:scaleX(0.917);transform-origin:0 0">Use name as prefix</div><div class="t" style="left:460px;top:221.5px;color:#000;font-size:12px;transform:scaleX(0.917);transform-origin:0 0">False</div><div style="position:absolute;left:300px;top:237px;width:336px;height:16px;background:#c8c8c8"></div><div style="position:absolute;left:300px;top:236px;width:336px;height:1px;background:#fafafa"></div><svg style="position:absolute;left:305px;top:242px;" width="10" height="7" viewBox="0 0 10 7"><path d="M0.7 1.7L4.5 5.5L8.3 1.7" stroke="#3c3c3c" stroke-width="1.7" fill="none"/></svg><div class="t" style="left:324px;top:237px;font-weight:bold">Configuration</div><div style="position:absolute;left:321px;top:253px;width:137px;height:15px;background:#fff"></div><div style="position:absolute;left:321px;top:268px;width:315px;height:1px;background:#d4d4d4"></div><div style="position:absolute;left:458px;top:253px;width:1px;height:16px;background:#d4d4d4"></div><div class="t" style="left:324px;top:253.5px;color:#000;font-size:12px;transform:scaleX(0.917);transform-origin:0 0">Inputs</div><div class="t" style="left:462px;top:253.5px;color:#000;font-size:12px;transform:scaleX(0.917);transform-origin:0 0;font-weight:bold;transform:none">Star grid with N/PE</div><div style="position:absolute;left:321px;top:269px;width:137px;height:15px;background:#c8c8c8"></div><div style="position:absolute;left:321px;top:284px;width:315px;height:1px;background:#d4d4d4"></div><div style="position:absolute;left:458px;top:269px;width:1px;height:16px;background:#d4d4d4"></div><div class="t" style="left:324px;top:269.5px;color:#000;font-size:12px;transform:scaleX(0.917);transform-origin:0 0">Measured values</div><div class="t" style="left:462px;top:269.5px;color:#000;font-size:12px;transform:scaleX(0.917);transform-origin:0 0;font-weight:bold;transform:none">Voltages and currents</div><div style="position:absolute;left:321px;top:285px;width:137px;height:15px;background:#fff"></div><div style="position:absolute;left:321px;top:300px;width:315px;height:1px;background:#d4d4d4"></div><div style="position:absolute;left:458px;top:285px;width:1px;height:16px;background:#d4d4d4"></div><div class="t" style="left:324px;top:285.5px;color:#000;font-size:12px;transform:scaleX(0.917);transform-origin:0 0">Show line-to-line</div><div class="t" style="left:462px;top:285.5px;color:#000;font-size:12px;transform:scaleX(0.917);transform-origin:0 0;font-weight:bold;transform:none">False</div><svg style="position:absolute;left:305px;top:290px;" width="10" height="7" viewBox="0 0 10 7"><path d="M0.7 1.7L4.5 5.5L8.3 1.7" stroke="#3c3c3c" stroke-width="1.7" fill="none"/></svg><div style="position:absolute;left:321px;top:301px;width:137px;height:15px;background:#fff"></div><div style="position:absolute;left:321px;top:316px;width:315px;height:1px;background:#d4d4d4"></div><div style="position:absolute;left:458px;top:301px;width:1px;height:16px;background:#d4d4d4"></div><div class="t" style="left:345px;top:301.5px;color:#000;font-size:12px;transform:scaleX(0.917);transform-origin:0 0">U1N</div><div class="t" style="left:462px;top:301.5px;color:#000;font-size:12px;transform:scaleX(0.917);transform-origin:0 0;font-weight:bold;transform:none">[1:0] L1</div><div style="position:absolute;left:321px;top:317px;width:137px;height:15px;background:#fff"></div><div style="position:absolute;left:321px;top:332px;width:315px;height:1px;background:#d4d4d4"></div><div style="position:absolute;left:458px;top:317px;width:1px;height:16px;background:#d4d4d4"></div><div class="t" style="left:345px;top:317.5px;color:#000;font-size:12px;transform:scaleX(0.917);transform-origin:0 0">U2N</div><div class="t" style="left:462px;top:317.5px;color:#000;font-size:12px;transform:scaleX(0.917);transform-origin:0 0;font-weight:bold;transform:none">[1:1] L2</div><div style="position:absolute;left:321px;top:333px;width:137px;height:15px;background:#fff"></div><div style="position:absolute;left:321px;top:348px;width:315px;height:1px;background:#d4d4d4"></div><div style="position:absolute;left:458px;top:333px;width:1px;height:16px;background:#d4d4d4"></div><div class="t" style="left:345px;top:333.5px;color:#000;font-size:12px;transform:scaleX(0.917);transform-origin:0 0">U3N</div><div class="t" style="left:462px;top:333.5px;color:#000;font-size:12px;transform:scaleX(0.917);transform-origin:0 0;font-weight:bold;transform:none">[1:3]</div><div style="position:absolute;left:321px;top:349px;width:137px;height:15px;background:#fff"></div><div style="position:absolute;left:321px;top:364px;width:315px;height:1px;background:#d4d4d4"></div><div style="position:absolute;left:458px;top:349px;width:1px;height:16px;background:#d4d4d4"></div><div class="t" style="left:345px;top:349.5px;color:#000;font-size:12px;transform:scaleX(0.917);transform-origin:0 0">Un</div><div class="t" style="left:462px;top:349.5px;color:#000;font-size:12px;transform:scaleX(0.917);transform-origin:0 0;font-weight:bold;transform:none">Unassigned</div><div style="position:absolute;left:321px;top:365px;width:137px;height:15px;background:#fff"></div><div style="position:absolute;left:321px;top:380px;width:315px;height:1px;background:#d4d4d4"></div><div style="position:absolute;left:458px;top:365px;width:1px;height:16px;background:#d4d4d4"></div><div class="t" style="left:345px;top:365.5px;color:#000;font-size:12px;transform:scaleX(0.917);transform-origin:0 0">I1</div><div class="t" style="left:462px;top:365.5px;color:#000;font-size:12px;transform:scaleX(0.917);transform-origin:0 0;font-weight:bold;transform:none">[2:0] Channel 0: 6,25A max</div><div style="position:absolute;left:321px;top:381px;width:137px;height:15px;background:#fff"></div><div style="position:absolute;left:321px;top:396px;width:315px;height:1px;background:#d4d4d4"></div><div style="position:absolute;left:458px;top:381px;width:1px;height:16px;background:#d4d4d4"></div><div class="t" style="left:345px;top:381.5px;color:#000;font-size:12px;transform:scaleX(0.917);transform-origin:0 0">I2</div><div class="t" style="left:462px;top:381.5px;color:#000;font-size:12px;transform:scaleX(0.917);transform-origin:0 0;font-weight:bold;transform:none">[2:1] Channel 1: 6,25A max</div><div style="position:absolute;left:321px;top:397px;width:137px;height:15px;background:#fff"></div><div style="position:absolute;left:321px;top:412px;width:315px;height:1px;background:#d4d4d4"></div><div style="position:absolute;left:458px;top:397px;width:1px;height:16px;background:#d4d4d4"></div><div class="t" style="left:345px;top:397.5px;color:#000;font-size:12px;transform:scaleX(0.917);transform-origin:0 0">I3</div><div class="t" style="left:462px;top:397.5px;color:#000;font-size:12px;transform:scaleX(0.917);transform-origin:0 0;font-weight:bold;transform:none">[2:2] Channel 2: 6,25A max</div><div style="position:absolute;left:321px;top:413px;width:137px;height:15px;background:#fff"></div><div style="position:absolute;left:321px;top:428px;width:315px;height:1px;background:#d4d4d4"></div><div style="position:absolute;left:458px;top:413px;width:1px;height:16px;background:#d4d4d4"></div><div class="t" style="left:345px;top:413.5px;color:#000;font-size:12px;transform:scaleX(0.917);transform-origin:0 0">In</div><div class="t" style="left:462px;top:413.5px;color:#000;font-size:12px;transform:scaleX(0.917);transform-origin:0 0;font-weight:bold;transform:none">Unassigned</div><div style="position:absolute;left:321px;top:429px;width:137px;height:15px;background:#fff"></div><div style="position:absolute;left:321px;top:444px;width:315px;height:1px;background:#d4d4d4"></div><div style="position:absolute;left:458px;top:429px;width:1px;height:16px;background:#d4d4d4"></div><div class="t" style="left:324px;top:429.5px;color:#000;font-size:12px;transform:scaleX(0.917);transform-origin:0 0">Nominal voltage</div><div class="t" style="left:460px;top:429.5px;color:#000;font-size:12px;transform:scaleX(0.917);transform-origin:0 0">230 V</div><div style="position:absolute;left:321px;top:445px;width:137px;height:15px;background:#fff"></div><div style="position:absolute;left:321px;top:460px;width:315px;height:1px;background:#d4d4d4"></div><div style="position:absolute;left:458px;top:445px;width:1px;height:16px;background:#d4d4d4"></div><div class="t" style="left:324px;top:445.5px;color:#000;font-size:12px;transform:scaleX(0.917);transform-origin:0 0">Mains signalling</div><div class="t" style="left:462px;top:445.5px;color:#000;font-size:12px;transform:scaleX(0.917);transform-origin:0 0;font-weight:bold;transform:none">Disabled</div><div style="position:absolute;left:300px;top:461px;width:336px;height:16px;background:#c8c8c8"></div><div style="position:absolute;left:300px;top:460px;width:336px;height:1px;background:#fafafa"></div><svg style="position:absolute;left:305px;top:466px;" width="10" height="7" viewBox="0 0 10 7"><path d="M0.7 1.7L4.5 5.5L8.3 1.7" stroke="#3c3c3c" stroke-width="1.7" fill="none"/></svg><div class="t" style="left:324px;top:461px;font-weight:bold">Units</div><div style="position:absolute;left:321px;top:477px;width:137px;height:15px;background:#fff"></div><div style="position:absolute;left:321px;top:492px;width:315px;height:1px;background:#d4d4d4"></div><div style="position:absolute;left:458px;top:477px;width:1px;height:16px;background:#d4d4d4"></div><div class="t" style="left:324px;top:477.5px;color:#000;font-size:12px;transform:scaleX(0.917);transform-origin:0 0">Voltage unit</div><div class="t" style="left:460px;top:477.5px;color:#000;font-size:12px;transform:scaleX(0.917);transform-origin:0 0">V</div><div style="position:absolute;left:321px;top:493px;width:137px;height:15px;background:#fff"></div><div style="position:absolute;left:321px;top:508px;width:315px;height:1px;background:#d4d4d4"></div><div style="position:absolute;left:458px;top:493px;width:1px;height:16px;background:#d4d4d4"></div><div class="t" style="left:324px;top:493.5px;color:#000;font-size:12px;transform:scaleX(0.917);transform-origin:0 0">Current unit</div><div class="t" style="left:460px;top:493.5px;color:#000;font-size:12px;transform:scaleX(0.917);transform-origin:0 0">A</div><div style="position:absolute;left:321px;top:509px;width:137px;height:15px;background:#fff"></div><div style="position:absolute;left:321px;top:524px;width:315px;height:1px;background:#d4d4d4"></div><div style="position:absolute;left:458px;top:509px;width:1px;height:16px;background:#d4d4d4"></div><div class="t" style="left:324px;top:509.5px;color:#000;font-size:12px;transform:scaleX(0.917);transform-origin:0 0">Power unit</div><div class="t" style="left:460px;top:509.5px;color:#000;font-size:12px;transform:scaleX(0.917);transform-origin:0 0">W - var - VA</div><div style="position:absolute;left:321px;top:525px;width:137px;height:15px;background:#fff"></div><div style="position:absolute;left:321px;top:540px;width:315px;height:1px;background:#d4d4d4"></div><div style="position:absolute;left:458px;top:525px;width:1px;height:16px;background:#d4d4d4"></div><div class="t" style="left:324px;top:525.5px;color:#000;font-size:12px;transform:scaleX(0.917);transform-origin:0 0">Energy unit</div><div class="t" style="left:460px;top:525.5px;color:#000;font-size:12px;transform:scaleX(0.917);transform-origin:0 0">kWh - kvarh - kVAh</div><div style="position:absolute;left:300px;top:541px;width:336px;height:16px;background:#c8c8c8"></div><div style="position:absolute;left:300px;top:540px;width:336px;height:1px;background:#fafafa"></div><svg style="position:absolute;left:305px;top:546px;" width="10" height="7" viewBox="0 0 10 7"><path d="M0.7 1.7L4.5 5.5L8.3 1.7" stroke="#3c3c3c" stroke-width="1.7" fill="none"/></svg><div class="t" style="left:324px;top:541px;font-weight:bold">Standard generation</div><div style="position:absolute;left:321px;top:557px;width:137px;height:15px;background:#fff"></div><div style="position:absolute;left:321px;top:572px;width:315px;height:1px;background:#d4d4d4"></div><div style="position:absolute;left:458px;top:557px;width:1px;height:16px;background:#d4d4d4"></div><div class="t" style="left:324px;top:557.5px;color:#000;font-size:12px;transform:scaleX(0.917);transform-origin:0 0">Enable currents</div><div class="t" style="left:462px;top:557.5px;color:#000;font-size:12px;transform:scaleX(0.917);transform-origin:0 0;font-weight:bold;transform:none">False</div><div style="position:absolute;left:299px;top:593px;width:338px;height:150px;border:1px solid #a0a0a0;background:#f0f0f0"></div><div class="t" style="left:304px;top:596px;font-weight:bold">Measured values</div><div class="t" style="left:304px;top:611.0px;line-height:13px">Select the type of the provided input signals:</div><div class="t" style="left:304px;top:623.3px;line-height:13px">-Voltages and currents</div><div class="t" style="left:304px;top:635.6px;line-height:13px">-Voltages only</div><div class="t" style="left:304px;top:647.9px;line-height:13px">-Currents only</div><div style="position:absolute;left:299px;top:753px;width:338px;height:50px;border:1px solid #a0a0a0;background:#f0f0f0"></div><div class="t" style="left:306px;top:762px;color:#0000ff;font-size:11.2px"><span style="text-decoration:underline">Configure limit profiles</span></div><div class="t" style="left:306px;top:778px;color:#0000ff;font-size:11.2px"><span style="text-decoration:underline">Configure event settings</span></div><div style="position:absolute;left:653px;top:123px;width:350px;height:347px;background:#fff;border:1px solid #646464;box-shadow:1px 1px 0 #fff"></div><svg style="position:absolute;left:653px;top:123px" width="350" height="347" viewBox="653 123 350 347"><path d="M682,151.5 L876.5,151.5 L876.5,190 L886.7,194.5 L865.8,202.9 L886.7,211.7 L865.8,220.3 L886.7,228.7 L865.8,237.5 L876.5,241.8 L876.5,278.3" fill="none" stroke="#000" stroke-width="1" /><path d="M730.3,147.3 L739.5,151.5 L730.3,155.7Z" fill="#000"/><path d="M682,340.8 L767,340.8 L802,320.9 L800.7,310.3 L818.5,323 L816,301.8 L833.5,314.1 L831.2,293.2 L848.4,305.9 L847.8,294.4 L876.5,278.3" fill="none" stroke="#000" stroke-width="1" /><path d="M730.3,336.8 L739.5,340.8 L730.3,344.8Z" fill="#000"/><path d="M682,392.5 L987.5,392.5 L987.5,341.3 L951.5,321.4 L942.6,327.6 L945.3,306.4 L927.8,318.7 L930.3,298.2 L912.7,310.5 L915.2,289.2 L906.7,295.4 L876.5,278.3" fill="none" stroke="#000" stroke-width="1" /><path d="M730.3,388.5 L739.5,392.5 L730.3,396.5Z" fill="#000"/><path d="M889.5,255 L889.5,186" fill="none" stroke="#000" stroke-width="1" /><path d="M885.5,188 L889.5,179.5 L893.5,188Z" fill="#000"/><path d="M842.7,279.8 L790,310" fill="none" stroke="#000" stroke-width="1" /><path d="M786,313.5 L795.5,313 L791.5,305.5Z" fill="#000"/><path d="M913.8,279.4 L966,310" fill="none" stroke="#000" stroke-width="1" /><path d="M961.5,312.8 L970,313.3 L966.5,305.8Z" fill="#000"/><path d="M768.5,453.6 L768.5,436" fill="none" stroke="#000" stroke-width="1" /><path d="M764.5,438.2 L768.5,431.3 L772.5,438.2Z" fill="#000"/><path d="M876.5,278.3 L898,265.2 L1001.5,265.2" fill="none" stroke="#1a1aff" stroke-width="1.1" stroke-dasharray="4 2"/><path d="M1001.5,265.2 L1001.5,426.5" fill="none" stroke="#1a1aff" stroke-width="1" stroke-dasharray="4 2"/><path d="M681.5,426.5 L1001.5,426.5" fill="none" stroke="#1a1aff" stroke-width="1" stroke-dasharray="4 2"/><path d="M796.1,423 L805.2,426.5 L796.1,430Z" fill="#000"/><path d="M681.5,457 L1001,457" fill="none" stroke="#55c98a" stroke-width="2" stroke-dasharray="4 2"/><text x="657.2" y="155.3" font-size="16" font-family="Liberation Sans" fill="#000" >L</text><text x="664.7" y="157.8" font-size="11" font-family="Liberation Sans" fill="#000" >1</text><text x="657.1" y="346.3" font-size="16" font-family="Liberation Sans" fill="#000" >L</text><text x="666" y="348.1" font-size="11" font-family="Liberation Sans" fill="#000" >2</text><text x="657.1" y="396.8" font-size="16" font-family="Liberation Sans" fill="#000" >L</text><text x="666" y="399.1" font-size="11" font-family="Liberation Sans" fill="#000" >3</text><text x="658.8" y="431.1" font-size="16" font-family="Liberation Sans" fill="#000" >N</text><text x="653.7" y="463.2" font-size="16" font-family="Liberation Sans" fill="#000" >PE</text><text x="729.2" y="140.7" font-size="16" font-family="Liberation Sans" fill="#000" >i</text><text x="731.5" y="143.6" font-size="11" font-family="Liberation Sans" fill="#000" >1</text><text x="729.2" y="330.8" font-size="16" font-family="Liberation Sans" fill="#000" >i</text><text x="732.4" y="332.9" font-size="11" font-family="Liberation Sans" fill="#000" >2</text><text x="729.2" y="382.3" font-size="16" font-family="Liberation Sans" fill="#000" >i</text><text x="732.4" y="384.4" font-size="11" font-family="Liberation Sans" fill="#000" >3</text><text x="794.7" y="416.6" font-size="16" font-family="Liberation Sans" fill="#000" >i</text><text x="797.9" y="418.8" font-size="11" font-family="Liberation Sans" fill="#000" >n</text><text x="896.8" y="221.9" font-size="16" font-family="Liberation Sans" fill="#000" >u</text><text x="904.6" y="223.6" font-size="11" font-family="Liberation Sans" fill="#000" >1</text><text x="778" y="445.3" font-size="16" font-family="Liberation Sans" fill="#000" >u</text><text x="786.3" y="447.4" font-size="11" font-family="Liberation Sans" fill="#000" >n</text><path d="M894.6999999999999,180.7H902.1M898.4,177.0V184.39999999999998" stroke="#000" stroke-width="1.1"/><path d="M894.2,253.7H899.1" stroke="#000" stroke-width="1.3"/><path d="M777.5999999999999,310H785.0M781.3,306.3V313.7" stroke="#000" stroke-width="1.1"/><path d="M841.2,274.5H845.8" stroke="#000" stroke-width="1.3"/><path d="M970.8,310.2H978.2M974.5,306.5V313.9" stroke="#000" stroke-width="1.1"/><path d="M909.3,275.6H913.9" stroke="#000" stroke-width="1.3"/><path d="M751.3,434.3H758.7M755,430.6V438.0" stroke="#000" stroke-width="1.1"/><path d="M752.8,449.6H757" stroke="#000" stroke-width="1.3"/><g transform="translate(803,294) rotate(-30)"><text x="0" y="0" font-size="16" font-family="Liberation Sans">u</text><text x="8" y="2" font-size="11" font-family="Liberation Sans">2</text></g><g transform="translate(938,286) rotate(30)"><text x="0" y="0" font-size="16" font-family="Liberation Sans">u</text><text x="8" y="2" font-size="11" font-family="Liberation Sans">3</text></g></svg><div style="position:absolute;left:283px;top:824px;width:421px;height:1px;background:#fafafa"></div><div style="position:absolute;left:284px;top:827px;width:419px;height:15px;background:linear-gradient(to right,#1e8a1e 0%,#5aaa26 25%,#a8d020 50%,#c8e020 62.5%,#eef020 75%,#f8e818 81%,#f8a020 87.5%,#f86828 94%,#f41e1e 100%)"></div><div style="position:absolute;left:282px;top:825px;width:423px;height:1px;background:#000"></div><div style="position:absolute;left:284px;top:826px;width:419px;height:1px;background:#fff"></div><div style="position:absolute;left:282px;top:825px;width:2px;height:17px;background:#000"></div><div style="position:absolute;left:703px;top:825px;width:2px;height:17px;background:#000"></div><div style="position:absolute;left:296px;top:826px;width:1px;height:6px;background:rgba(0,0,0,0.75)"></div><div style="position:absolute;left:309px;top:826px;width:1px;height:6px;background:rgba(0,0,0,0.75)"></div><div style="position:absolute;left:322px;top:826px;width:1px;height:6px;background:rgba(0,0,0,0.75)"></div><div style="position:absolute;left:335px;top:826px;width:1px;height:16px;background:rgba(0,0,0,0.3)"></div><div style="position:absolute;left:335px;top:826px;width:1px;height:2px;background:rgba(0,0,0,0.8)"></div><div style="position:absolute;left:348px;top:826px;width:1px;height:6px;background:rgba(0,0,0,0.75)"></div><div style="position:absolute;left:361px;top:826px;width:1px;height:6px;background:rgba(0,0,0,0.75)"></div><div style="position:absolute;left:374px;top:826px;width:1px;height:6px;background:rgba(0,0,0,0.75)"></div><div style="position:absolute;left:388px;top:826px;width:1px;height:16px;background:rgba(0,0,0,0.3)"></div><div style="position:absolute;left:388px;top:826px;width:1px;height:2px;background:rgba(0,0,0,0.8)"></div><div style="position:absolute;left:401px;top:826px;width:1px;height:6px;background:rgba(0,0,0,0.75)"></div><div style="position:absolute;left:414px;top:826px;width:1px;height:6px;background:rgba(0,0,0,0.75)"></div><div style="position:absolute;left:427px;top:826px;width:1px;height:6px;background:rgba(0,0,0,0.75)"></div><div style="position:absolute;left:440px;top:826px;width:1px;height:16px;background:rgba(0,0,0,0.3)"></div><div style="position:absolute;left:440px;top:826px;width:1px;height:2px;background:rgba(0,0,0,0.8)"></div><div style="position:absolute;left:453px;top:826px;width:1px;height:6px;background:rgba(0,0,0,0.75)"></div><div style="position:absolute;left:466px;top:826px;width:1px;height:6px;background:rgba(0,0,0,0.75)"></div><div style="position:absolute;left:479px;top:826px;width:1px;height:6px;background:rgba(0,0,0,0.75)"></div><div style="position:absolute;left:493px;top:826px;width:1px;height:16px;background:rgba(0,0,0,0.3)"></div><div style="position:absolute;left:493px;top:826px;width:1px;height:2px;background:rgba(0,0,0,0.8)"></div><div style="position:absolute;left:506px;top:826px;width:1px;height:6px;background:rgba(0,0,0,0.75)"></div><div style="position:absolute;left:519px;top:826px;width:1px;height:6px;background:rgba(0,0,0,0.75)"></div><div style="position:absolute;left:532px;top:826px;width:1px;height:6px;background:rgba(0,0,0,0.75)"></div><div style="position:absolute;left:545px;top:826px;width:1px;height:16px;background:rgba(0,0,0,0.3)"></div><div style="position:absolute;left:545px;top:826px;width:1px;height:2px;background:rgba(0,0,0,0.8)"></div><div style="position:absolute;left:558px;top:826px;width:1px;height:6px;background:rgba(0,0,0,0.75)"></div><div style="position:absolute;left:571px;top:826px;width:1px;height:6px;background:rgba(0,0,0,0.75)"></div><div style="position:absolute;left:584px;top:826px;width:1px;height:6px;background:rgba(0,0,0,0.75)"></div><div style="position:absolute;left:598px;top:826px;width:1px;height:16px;background:rgba(0,0,0,0.3)"></div><div style="position:absolute;left:598px;top:826px;width:1px;height:2px;background:rgba(0,0,0,0.8)"></div><div style="position:absolute;left:611px;top:826px;width:1px;height:6px;background:rgba(0,0,0,0.75)"></div><div style="position:absolute;left:624px;top:826px;width:1px;height:6px;background:rgba(0,0,0,0.75)"></div><div style="position:absolute;left:637px;top:826px;width:1px;height:6px;background:rgba(0,0,0,0.75)"></div><div style="position:absolute;left:650px;top:826px;width:1px;height:16px;background:rgba(0,0,0,0.3)"></div><div style="position:absolute;left:650px;top:826px;width:1px;height:2px;background:rgba(0,0,0,0.8)"></div><div style="position:absolute;left:663px;top:826px;width:1px;height:6px;background:rgba(0,0,0,0.75)"></div><div style="position:absolute;left:676px;top:826px;width:1px;height:6px;background:rgba(0,0,0,0.75)"></div><div style="position:absolute;left:689px;top:826px;width:1px;height:6px;background:rgba(0,0,0,0.75)"></div><div class="t" style="left:283px;top:842px;font-size:12px;line-height:14px">0</div><div class="t" style="left:315.5px;top:842px;font-size:12px;line-height:14px"><div style="width:40px;text-align:center">128</div></div><div class="t" style="left:368.0px;top:842px;font-size:12px;line-height:14px"><div style="width:40px;text-align:center">256</div></div><div class="t" style="left:420.5px;top:842px;font-size:12px;line-height:14px"><div style="width:40px;text-align:center">384</div></div><div class="t" style="left:473.0px;top:842px;font-size:12px;line-height:14px"><div style="width:40px;text-align:center">512</div></div><div class="t" style="left:525.5px;top:842px;font-size:12px;line-height:14px"><div style="width:40px;text-align:center">640</div></div><div class="t" style="left:578.0px;top:842px;font-size:12px;line-height:14px"><div style="width:40px;text-align:center">768</div></div><div class="t" style="left:630.5px;top:842px;font-size:12px;line-height:14px"><div style="width:40px;text-align:center">896</div></div><div class="t" style="left:675.0px;top:842px;font-size:12px;line-height:14px"><div style="width:28px;text-align:right">1024</div></div><div class="t" style="left:723px;top:833px;font-size:16px;font-weight:bold;color:#f8101a;line-height:18px">1031</div><div style="position:absolute;left:773px;top:830px;width:73px;height:21px;background:#e1e1e1;border:2px solid #0078d7"></div><div class="t" style="left:773px;top:833.3px;font-size:11px"><div style="width:73px;text-align:center">OK</div></div><div style="position:absolute;left:854px;top:830px;width:73px;height:21px;background:#e1e1e1;border:1px solid #adadad"></div><div class="t" style="left:854px;top:833.3px;font-size:11px"><div style="width:73px;text-align:center">Apply</div></div><div style="position:absolute;left:935px;top:830px;width:73px;height:21px;background:#e1e1e1;border:1px solid #adadad"></div><div class="t" style="left:935px;top:833.3px;font-size:11px"><div style="width:73px;text-align:center">Cancel</div></div></body></html>
